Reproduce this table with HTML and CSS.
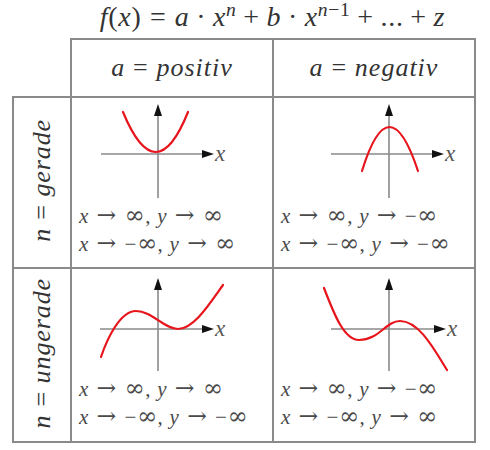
FILE: index.html
```html
<!DOCTYPE html>
<html>
<head>
<meta charset="utf-8">
<link rel="stylesheet" href="styles.css">
</head>
<body>
<div class="page">
  <div class="title"><i>f</i>(<i>x</i>)<span class="rel">=</span><i>a</i><span class="bin">·</span><i>x<sup>n</sup></i><span class="bin">+</span><i>b</i><span class="bin">·</span><i>x<sup>n</sup></i><sup class="exp">−1</sup><span class="bin">+</span>...<span class="bin">+</span><i>z</i></div>
  <table class="grid">
    <colgroup><col class="c-label"><col class="c-data"><col class="c-data"></colgroup>
    <tr class="head">
      <td class="corner"></td>
      <th><i>a</i><span class="rel">=</span><i>positiv</i></th>
      <th><i>a</i><span class="rel">=</span><i>negativ</i></th>
    </tr>
    <tr class="row-even">
      <td class="label"><span class="vtext"><i>n</i><span class="rel">=</span><i>gerade</i></span></td>
      <td class="cell">
        <svg class="plot" width="200" height="104" viewBox="0 0 200 104">
          <line class="axis" x1="86" y1="16" x2="86" y2="100"/>
          <polygon class="arrow" points="86,6 82,18 90,18"/>
          <line class="axis" x1="29" y1="56" x2="132" y2="56"/>
          <polygon class="arrow" points="142,56 130,52 130,60"/>
          <text class="ax" x="143" y="63">x</text>
          <path class="curve" d="M51,14 Q84,94 116,14"/>
        </svg>
        <div class="lines">
          <div><i>x</i><span class="sym">→</span><span class="inf">∞</span>,<i class="y">y</i><span class="sym">→</span><span class="inf">∞</span></div>
          <div><i>x</i><span class="sym">→</span>−<span class="inf">∞</span>,<i class="y">y</i><span class="sym">→</span><span class="inf">∞</span></div>
        </div>
      </td>
      <td class="cell">
        <svg class="plot" width="200" height="104" viewBox="0 0 200 104">
          <line class="axis" x1="115" y1="16" x2="115" y2="100"/>
          <polygon class="arrow" points="115,6 111,18 119,18"/>
          <line class="axis" x1="57" y1="56" x2="160" y2="56"/>
          <polygon class="arrow" points="170,56 158,52 158,60"/>
          <text class="ax" x="171" y="63">x</text>
          <path class="curve" d="M88,73 Q115,-15 144,73"/>
        </svg>
        <div class="lines">
          <div><i>x</i><span class="sym">→</span><span class="inf">∞</span>,<i class="y">y</i><span class="sym">→</span>−<span class="inf">∞</span></div>
          <div><i>x</i><span class="sym">→</span>−<span class="inf">∞</span>,<i class="y">y</i><span class="sym">→</span>−<span class="inf">∞</span></div>
        </div>
      </td>
    </tr>
    <tr class="row-odd">
      <td class="label"><span class="vtext"><i>n</i><span class="rel">=</span><i>ungerade</i></span></td>
      <td class="cell">
        <svg class="plot" width="200" height="106" viewBox="0 0 200 106">
          <line class="axis" x1="86" y1="19" x2="86" y2="102"/>
          <polygon class="arrow" points="86,9 82,21 90,21"/>
          <line class="axis" x1="28" y1="60" x2="132" y2="60"/>
          <polygon class="arrow" points="142,60 130,56 130,64"/>
          <text class="ax" x="143" y="67">x</text>
          <path class="curve" d="M29,88 C35,70 48,42 64,42 C80,42 92,60 106,60 C122,60 138,34 151,16"/>
        </svg>
        <div class="lines">
          <div><i>x</i><span class="sym">→</span><span class="inf">∞</span>,<i class="y">y</i><span class="sym">→</span><span class="inf">∞</span></div>
          <div><i>x</i><span class="sym">→</span>−<span class="inf">∞</span>,<i class="y">y</i><span class="sym">→</span>−<span class="inf">∞</span></div>
        </div>
      </td>
      <td class="cell">
        <svg class="plot" width="200" height="106" viewBox="0 0 200 106">
          <line class="axis" x1="115" y1="19" x2="115" y2="102"/>
          <polygon class="arrow" points="115,9 111,21 119,21"/>
          <line class="axis" x1="57" y1="60" x2="162" y2="60"/>
          <polygon class="arrow" points="172,60 160,56 160,64"/>
          <text class="ax" x="173" y="67">x</text>
          <path class="curve" d="M50,19 C60,45 70,71 85,71 C105,71 112,52 126,52 C145,52 160,80 173,101"/>
        </svg>
        <div class="lines">
          <div><i>x</i><span class="sym">→</span><span class="inf">∞</span>,<i class="y">y</i><span class="sym">→</span>−<span class="inf">∞</span></div>
          <div><i>x</i><span class="sym">→</span>−<span class="inf">∞</span>,<i class="y">y</i><span class="sym">→</span><span class="inf">∞</span></div>
        </div>
      </td>
    </tr>
  </table>
</div>
</body>
</html>
```

FILE: styles.css
```css
html, body {
  margin: 0;
  padding: 0;
  background: #ffffff;
}

body {
  font-family: "Liberation Serif", "Times New Roman", Times, "DejaVu Serif", serif;
  color: #333333;
}

.page {
  padding-left: 12px;
}

.title {
  width: 463px;
  box-sizing: border-box;
  padding-left: 58px;
  height: 38px;
  text-align: center;
  font-size: 28px;
  line-height: 34px;
  letter-spacing: 0.7px;
  white-space: nowrap;
}

.title sup {
  font-size: 0.7em;
  line-height: 0;
  vertical-align: 0.5em;
}

.rel {
  font-style: normal;
  margin-inline: 0.3em;
}

.bin {
  font-style: normal;
  margin-inline: 0.24em;
}

.grid {
  border-collapse: collapse;
  table-layout: fixed;
}

.c-label { width: 58px; }
.c-data { width: 202px; }

.grid td,
.grid th {
  border: 2px solid #8a8a8a;
  padding: 0;
}

.grid .corner {
  border: none;
}

.head {
  height: 58px;
}

.head th {
  font-weight: normal;
  font-size: 26px;
  letter-spacing: 1px;
  text-align: center;
  vertical-align: middle;
}

.row-even { height: 171px; }
.row-odd { height: 174px; }

.label {
  text-align: center;
  vertical-align: middle;
}

.vtext {
  display: inline-block;
  writing-mode: vertical-rl;
  transform: rotate(180deg);
  font-size: 26px;
  letter-spacing: 0.9px;
  white-space: nowrap;
}

.cell {
  vertical-align: top;
}

.plot {
  display: block;
}

.axis {
  stroke: #8a8a8a;
  stroke-width: 1.6;
}

.arrow {
  fill: #111111;
}

.ax {
  font-family: "Liberation Serif", "Times New Roman", serif;
  font-style: italic;
  font-size: 23px;
  fill: #555555;
}

.curve {
  fill: none;
  stroke: #e8141c;
  stroke-width: 2.2;
  stroke-linecap: round;
}

.lines {
  padding-left: 7px;
  font-size: 21px;
  line-height: 28px;
  letter-spacing: 0.5px;
  white-space: nowrap;
  color: #4a4a4a;
}

.sym {
  font-family: "DejaVu Serif", serif;
  font-size: 1.12em;
  line-height: 0;
  margin-inline: 0.33em;
}

.inf {
  font-family: "DejaVu Serif", serif;
  font-size: 1.15em;
  line-height: 0;
}

.y {
  margin-left: 0.3em;
}
```
